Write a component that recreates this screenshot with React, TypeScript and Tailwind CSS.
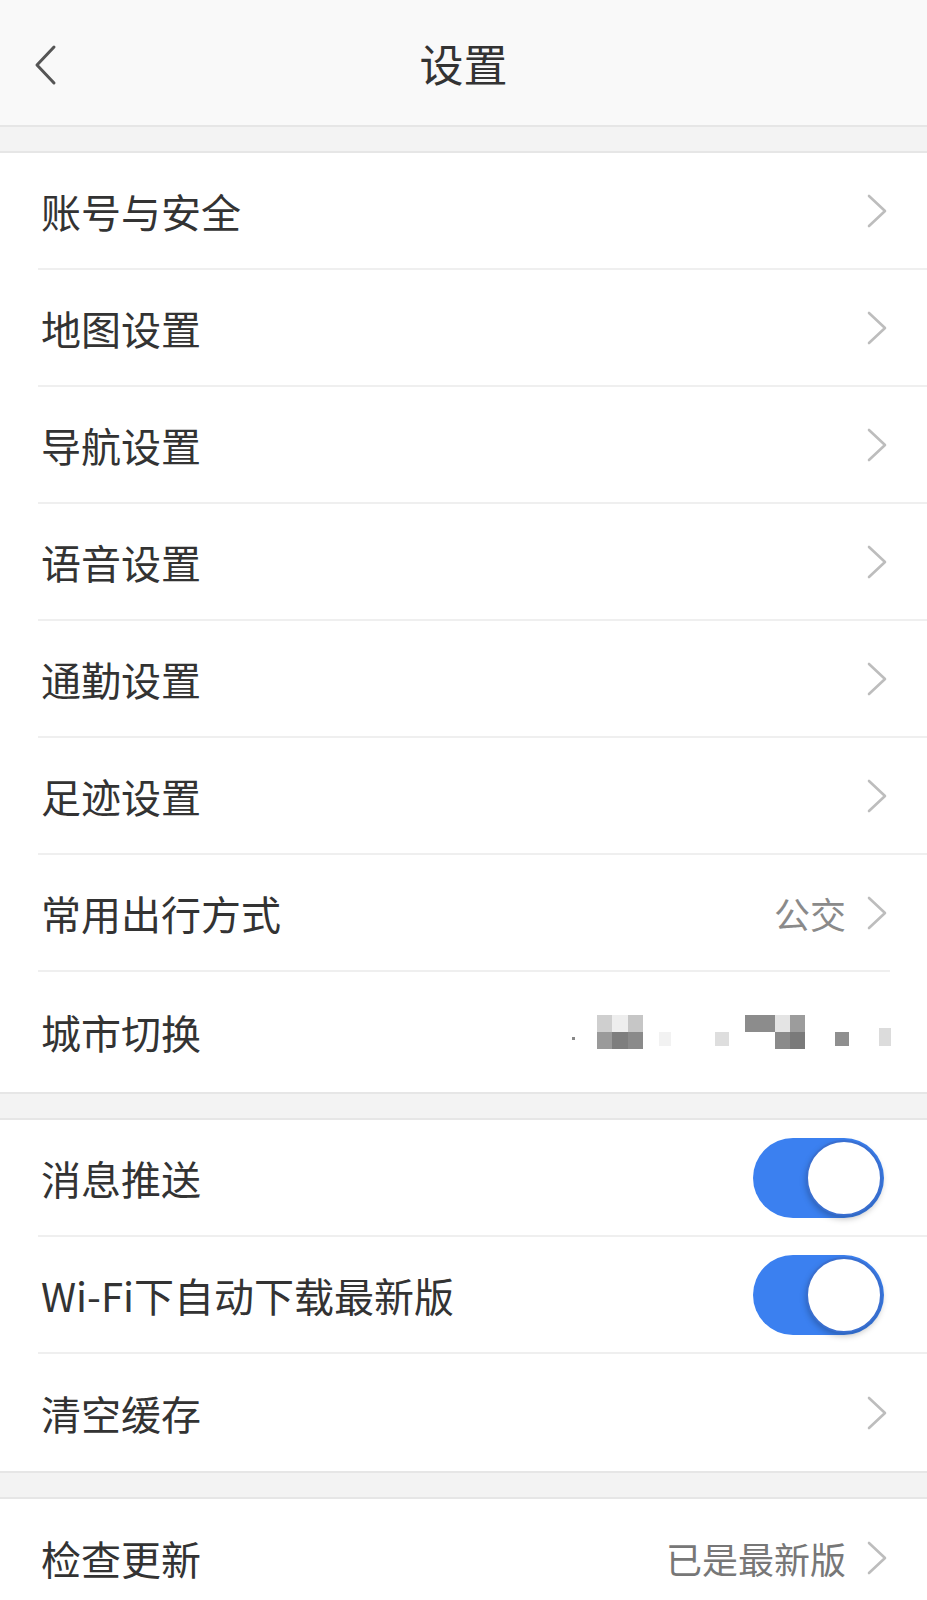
import { ReactNode } from "react";

const font = { fontFamily: '"Noto Sans CJK SC", "Noto Sans", sans-serif' };

function Chevron() {
  return (
    <svg width="22" height="36" viewBox="0 0 22 36" className="shrink-0">
      <polyline points="3,3 19,18 3,33" fill="none" stroke="#bdbdbd" strokeWidth="2.6" strokeLinecap="round" strokeLinejoin="round" />
    </svg>
  );
}

function Toggle() {
  return (
    <div className="relative h-[80px] w-[131px] rounded-full bg-[#3b80f0]">
      <div className="absolute right-[2px] top-[2px] h-[76px] w-[76px] rounded-full border-2 border-[#3a6fd0] bg-white shadow-[0_3px_6px_rgba(0,0,0,0.25)]" />
    </div>
  );
}

function Mosaic() {
  return (
    <div className="flex items-center gap-0 pr-[36px]">
      <span className="mr-[22px] mt-[12px] h-[3px] w-[3px] bg-[#888]" />
      <span className="flex h-[34px] w-[46px] flex-col">
        <span className="flex h-1/2">
          <span className="w-1/3 bg-[#cfcfcf]" />
          <span className="w-1/3 bg-[#eeeeee]" />
          <span className="w-1/3 bg-[#c6c6c6]" />
        </span>
        <span className="flex h-1/2">
          <span className="w-1/3 bg-[#9a9a9a]" />
          <span className="w-1/3 bg-[#7e7e7e]" />
          <span className="w-1/3 bg-[#8a8a8a]" />
        </span>
      </span>
      <span className="ml-[16px] mt-[14px] h-[14px] w-[12px] bg-[#f2f2f2]" />
      <span className="ml-[44px] mt-[14px] h-[14px] w-[14px] bg-[#dedede]" />
      <span className="ml-[16px] flex h-[34px] w-[60px] flex-col">
        <span className="flex h-1/2">
          <span className="w-1/2 bg-[#8c8c8c]" />
          <span className="w-1/4 bg-[#e4e4e4]" />
          <span className="w-1/4 bg-[#9c9c9c]" />
        </span>
        <span className="flex h-1/2">
          <span className="w-1/2 bg-white" />
          <span className="w-1/4 bg-[#8a8a8a]" />
          <span className="w-1/4 bg-[#7a7a7a]" />
        </span>
      </span>
      <span className="ml-[30px] mt-[14px] h-[14px] w-[14px] bg-[#8f8f8f]" />
      <span className="ml-[30px] mt-[10px] h-[18px] w-[12px] bg-[#dcdcdc]" />
    </div>
  );
}

function Row({ label, right, last, lineRight }: { label: string; right?: ReactNode; last?: boolean; lineRight?: boolean }) {
  return (
    <div className="pl-[38px]">
      <div
        className={
          "flex h-[117px] items-center justify-between " +
          (last ? "" : "border-b-2 border-[#efefef] ") +
          (lineRight ? "mr-[37px]" : "")
        }
      >
        <span className="pl-[3px] text-[40px] leading-none text-[#333333]">{label}</span>
        <div className={"flex items-center " + (lineRight ? "pr-0" : "pr-[39px]")}>{right}</div>
      </div>
    </div>
  );
}

function Band() {
  return <div className="h-[28px] border-y-2 border-[#e6e6e6] bg-[#f3f3f3]" />;
}

export default function App() {
  const group1 = ["账号与安全", "地图设置", "导航设置", "语音设置", "通勤设置", "足迹设置"];
  return (
    <div className="h-[1600px] w-[927px] overflow-hidden bg-white" style={font}>
      <div className="relative flex h-[125px] items-center justify-center bg-[#f9f9f9]">
        <svg width="26" height="42" viewBox="0 0 26 42" className="absolute left-[32px] top-[44px]">
          <polyline points="22,3 5,21 22,39" fill="none" stroke="#555555" strokeWidth="3" strokeLinecap="round" strokeLinejoin="round" />
        </svg>
        <span className="text-[44px] leading-none text-[#333333]">设置</span>
      </div>
      <Band />
      <div>
        {group1.map((l) => (
          <Row key={l} label={l} right={<Chevron />} />
        ))}
        <Row
          label="常用出行方式"
          lineRight
          right={
            <>
              <span className="mr-[20px] text-[36px] leading-none text-[#8a8a8a]">公交</span>
              <span className="pr-[2px]">
                <Chevron />
              </span>
            </>
          }
        />
        <div className="pl-[38px]">
          <div className="flex h-[120px] items-center justify-between">
            <span className="pl-[3px] text-[40px] leading-none text-[#333333]">城市切换</span>
            <Mosaic />
          </div>
        </div>
      </div>
      <Band />
      <div>
        <Row label="消息推送" right={<span className="mr-[4px]"><Toggle /></span>} />
        <Row label="Wi-Fi下自动下载最新版" right={<span className="mr-[4px]"><Toggle /></span>} />
        <Row label="清空缓存" right={<Chevron />} last />
      </div>
      <Band />
      <Row
        label="检查更新"
        last
        right={
          <>
            <span className="mr-[20px] text-[36px] leading-none text-[#777777]">已是最新版</span>
            <Chevron />
          </>
        }
      />
    </div>
  );
}
